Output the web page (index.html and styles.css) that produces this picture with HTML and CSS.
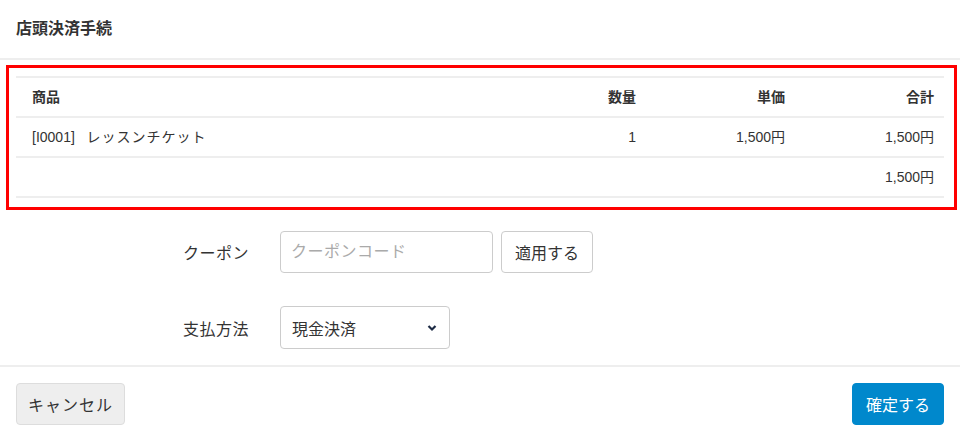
FILE: index.html
```html
<!DOCTYPE html>
<html lang="ja">
<head>
    <meta charset="UTF-8">
    <meta name="viewport" content="width=device-width, initial-scale=1.0">
    <title>店頭決済手続</title>
    <link rel="stylesheet" href="styles.css">
</head>
<body>
    <div class="modal">
        <header class="modal-header">
            <h1>店頭決済手続</h1>
        </header>

        <div class="modal-body">
            <div class="items-box">
                <table class="items">
                    <colgroup>
                        <col class="col-name">
                        <col class="col-num">
                        <col class="col-num">
                        <col class="col-num">
                    </colgroup>
                    <thead>
                        <tr>
                            <th>商品</th>
                            <th class="num">数量</th>
                            <th class="num">単価</th>
                            <th class="num">合計</th>
                        </tr>
                    </thead>
                    <tbody>
                        <tr>
                            <td>[I0001]&nbsp;&nbsp; <span class="item-name">レッスンチケット</span></td>
                            <td class="num">1</td>
                            <td class="num">1,500円</td>
                            <td class="num">1,500円</td>
                        </tr>
                        <tr>
                            <td></td>
                            <td></td>
                            <td></td>
                            <td class="num">1,500円</td>
                        </tr>
                    </tbody>
                </table>
            </div>

            <div class="form-row coupon-row">
                <label for="coupon">クーポン</label>
                <input type="text" id="coupon" class="coupon-input" placeholder="クーポンコード">
                <button type="button" class="btn btn-apply">適用する</button>
            </div>

            <div class="form-row payment-row">
                <label for="payment">支払方法</label>
                <div class="select" id="payment">
                    <span>現金決済</span>
                    <svg width="10" height="8" viewBox="0 0 10 8">
                        <path d="M1.5 2 L5 5.5 L8.5 2" fill="none" stroke="#1d2b44" stroke-width="2.2"/>
                    </svg>
                </div>
            </div>
        </div>

        <footer class="modal-footer">
            <button type="button" class="btn btn-cancel">キャンセル</button>
            <button type="button" class="btn btn-primary">確定する</button>
        </footer>
    </div>
</body>
</html>
```

FILE: styles.css
```css
body {
    margin: 0;
    font-family: "Liberation Sans", Arial, "Noto Sans CJK JP", sans-serif;
    font-size: 16px;
    color: #333;
    background-color: #ffffff;
}
.modal {
    width: 960px;
    height: 442px;
}
.modal-header {
    height: 58px;
    padding: 0 16px;
    display: flex;
    align-items: center;
    border-bottom: 2px solid #eeeeee;
}
.modal-header h1 {
    margin: 0;
    font-size: 16px;
    font-weight: bold;
    line-height: 1;
}
.modal-body {
    padding: 5px 3px 16px 6px;
}
.items-box {
    border: 3px solid #ff0000;
    padding: 8px 10px 9px 7px;
}
.items {
    width: 100%;
    border-collapse: collapse;
    table-layout: fixed;
    font-size: 14px;
    border-bottom: 2px solid #eeeeee;
}
.col-name {
    width: 481px;
}
.col-num {
    width: 149px;
}
.items th,
.items td {
    height: 40px;
    padding: 0 10px 0 16px;
    border-top: 2px solid #eeeeee;
    text-align: left;
    line-height: 20px;
    box-sizing: border-box;
}
.items th {
    font-weight: bold;
}
.items .num {
    text-align: right;
}
.item-name {
    letter-spacing: 1px;
}
.form-row {
    display: flex;
    align-items: center;
    padding-left: 177px;
}
.form-row label {
    flex: 0 0 97px;
    letter-spacing: 0.5px;
}
.coupon-row {
    margin-top: 21px;
}
.payment-row {
    margin-top: 33px;
}
.coupon-input {
    width: 213px;
    height: 42px;
    box-sizing: border-box;
    padding: 0 10px;
    border: 1px solid #cccccc;
    border-radius: 4px;
    font-family: inherit;
    font-size: 16px;
    color: #333;
}
.coupon-input::placeholder {
    color: #aaaaaa;
    letter-spacing: 0.5px;
}
.btn {
    height: 42px;
    box-sizing: border-box;
    padding: 0;
    border: 1px solid #cccccc;
    border-radius: 4px;
    font-family: inherit;
    font-size: 16px;
    color: #333;
    background-color: #ffffff;
    white-space: nowrap;
    cursor: pointer;
}
.btn-apply {
    width: 92px;
    margin-left: 8px;
}
.select {
    width: 170px;
    height: 43px;
    box-sizing: border-box;
    padding: 0 12px 0 11px;
    border: 1px solid #cccccc;
    border-radius: 4px;
    display: flex;
    align-items: center;
    justify-content: space-between;
}
.modal-footer {
    border-top: 2px solid #eeeeee;
    padding: 16px;
    display: flex;
    justify-content: space-between;
}
.btn-cancel {
    width: 109px;
    background-color: #eeeeee;
    border-color: #dddddd;
    letter-spacing: 1px;
}
.btn-primary {
    width: 92px;
    background-color: #0088cc;
    border-color: #0088cc;
    color: #ffffff;
}
```
